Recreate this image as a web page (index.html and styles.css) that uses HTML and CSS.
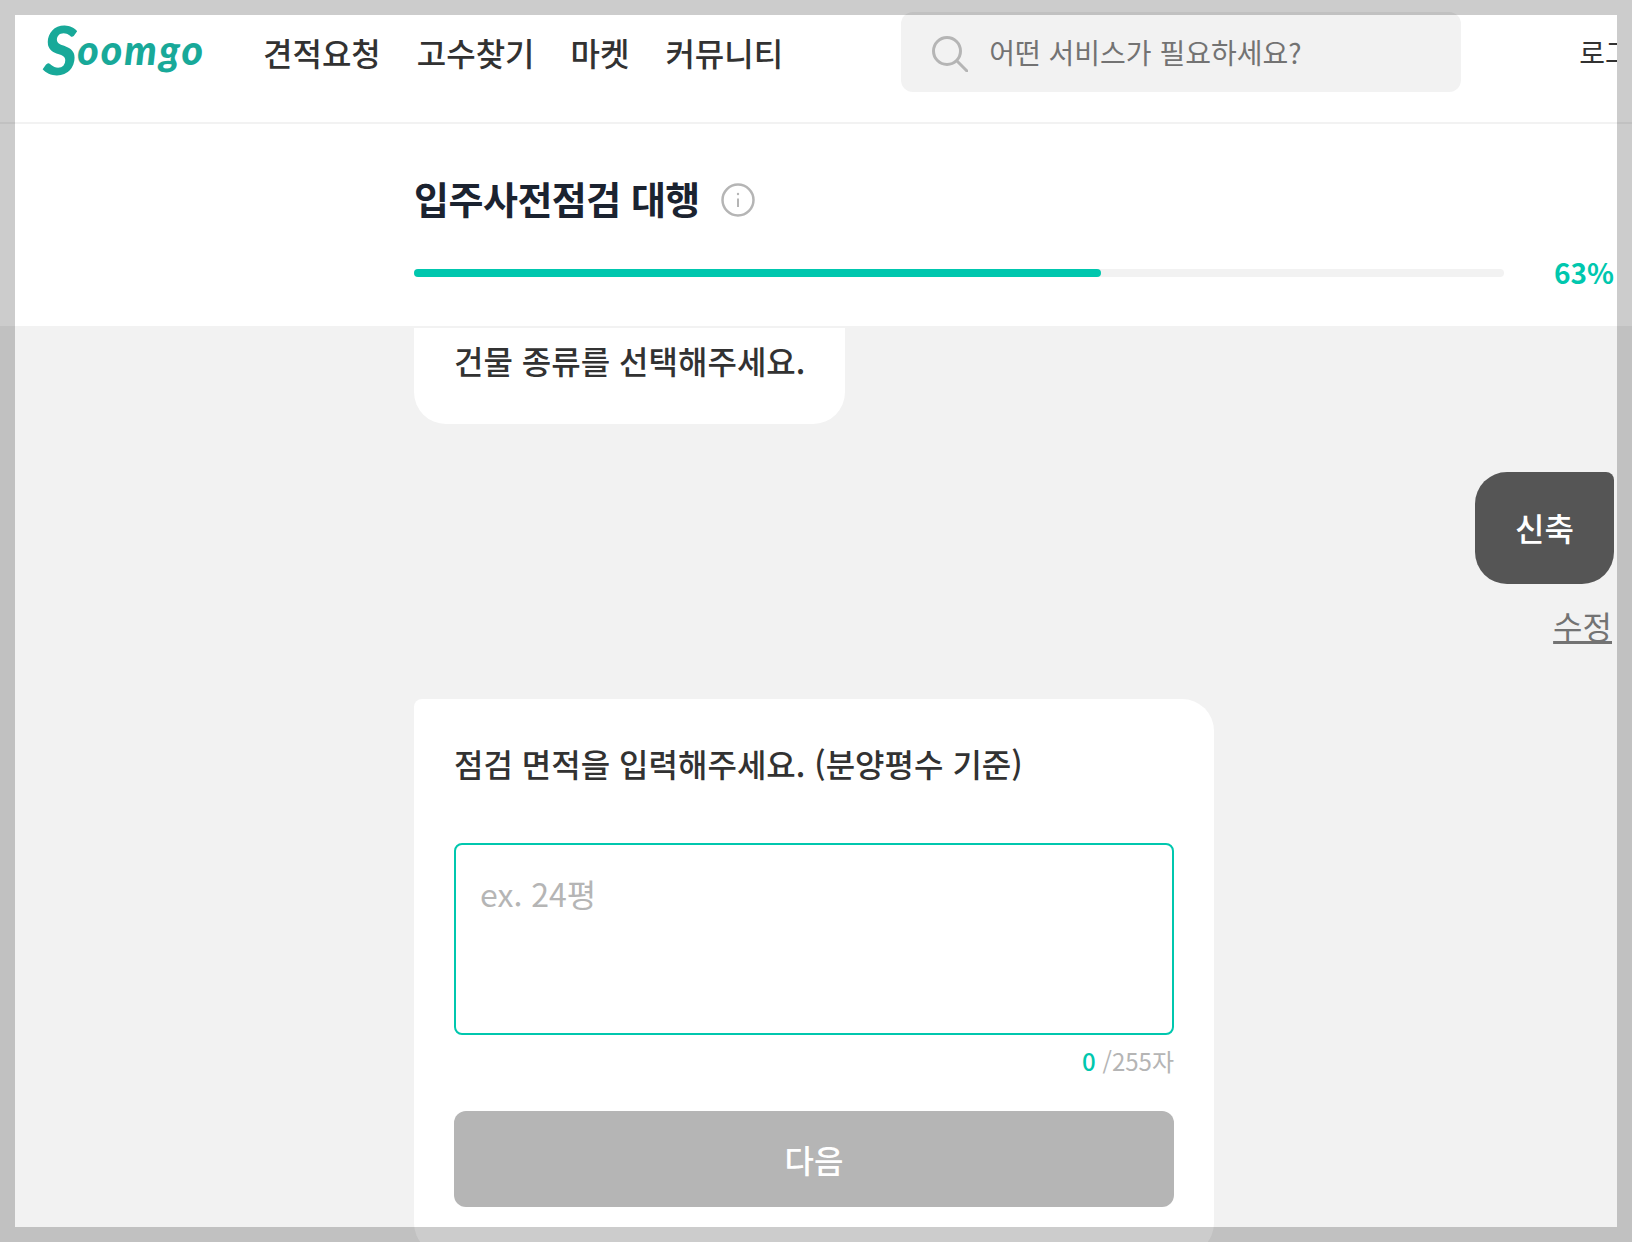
FILE: index.html
```html
<!DOCTYPE html>
<html lang="ko">
  <head>
    <meta charset="UTF-8" />
    <meta name="viewport" content="width=device-width, initial-scale=1.0" />
    <title>입주사전점검 대행</title>
    <link rel="stylesheet" href="styles.css">
  </head>
  <body>
    <header class="topbar">
      <a class="logo" href="#"><span class="logo-s">S</span><span class="logo-rest">oomgo</span></a>
      <nav class="nav">
        <a href="#">견적요청</a>
        <a href="#">고수찾기</a>
        <a href="#">마켓</a>
        <a href="#">커뮤니티</a>
      </nav>
      <div class="search">
        <svg class="search-icon" width="36" height="36" viewBox="0 0 36 36" fill="none" stroke="#b5b5b5" stroke-width="3" stroke-linecap="round">
          <circle cx="15" cy="15" r="13.5" />
          <path d="M25 25 L35 35" />
        </svg>
        <span class="search-text">어떤 서비스가 필요하세요?</span>
      </div>
      <div class="login"><a href="#">로그인</a></div>
    </header>

    <section class="progress-panel">
      <div class="title-row">
        <h1>입주사전점검 대행</h1>
        <svg class="info-icon" width="34" height="34" viewBox="0 0 34 34" fill="none" stroke="#b5b5b5" stroke-width="2.5">
          <circle cx="17" cy="17" r="15.5" />
          <path d="M17 15.5 V24" stroke-width="2" />
          <circle cx="17" cy="11" r="1.2" fill="#b5b5b5" stroke="none" />
        </svg>
      </div>
      <div class="progress-row">
        <div class="progress-track">
          <div class="progress-fill" style="width: 63%"></div>
        </div>
        <span class="progress-label">63%</span>
      </div>
    </section>

    <main class="chat">
      <div class="bubble">건물 종류를 선택해주세요.</div>
      <div class="answer">신축</div>
      <a class="edit-link" href="#">수정</a>

      <form class="question">
        <label for="area">점검 면적을 입력해주세요. (분양평수 기준)</label>
        <textarea id="area" placeholder="ex. 24평"></textarea>
        <div class="counter"><span class="count">0</span> /255자</div>
        <button type="button">다음</button>
      </form>
    </main>

    <div class="frame"></div>
  </body>
</html>
```

FILE: styles.css
```css
* {
  box-sizing: border-box;
}
body {
  margin: 0;
  height: 1242px;
  overflow: hidden;
  background-color: #f2f2f2;
  color: #323232;
  font-family: "Noto Sans CJK KR", "Noto Sans", sans-serif;
}
a {
  color: inherit;
  text-decoration: none;
}

.topbar {
  display: flex;
  align-items: center;
  height: 124px;
  padding: 0 15px 18px 43px;
  background-color: white;
  border-bottom: 2px solid #f2f2f2;
}
.logo {
  display: flex;
  align-items: flex-start;
  width: 160px;
  height: 54px;
  color: #18a999;
  font-family: Lato, sans-serif;
  font-style: italic;
  font-weight: 900;
  white-space: nowrap;
}
.logo-s {
  font-size: 66px;
  line-height: 49px;
}
.logo-rest {
  font-size: 41px;
  letter-spacing: 2px;
  line-height: 50px;
}
.nav {
  display: flex;
  gap: 36px;
  margin-left: 60px;
  font-size: 32px;
  font-weight: 500;
}
.search {
  display: flex;
  align-items: center;
  flex: none;
  width: 560px;
  height: 80px;
  margin-left: 118px;
  padding-left: 31px;
  background-color: #f2f2f2;
  border-radius: 12px;
}
.search-icon {
  flex: none;
  margin-top: 3px;
}
.search-text {
  margin-left: 21px;
  color: #737373;
  font-size: 28px;
}
.login {
  flex: 1;
  margin-left: 118px;
  overflow: hidden;
  font-size: 28px;
  white-space: nowrap;
}

.progress-panel {
  height: 204px;
  padding: 40px 18px 0 414px;
  background-color: white;
  border-bottom: 2px solid #f2f2f2;
}
.title-row {
  display: flex;
  align-items: center;
  height: 72px;
}
h1 {
  margin: 0;
  padding-bottom: 6px;
  color: #1b2330;
  font-size: 38px;
  font-weight: 700;
  letter-spacing: -0.5px;
}
.info-icon {
  margin-left: 21px;
}
.progress-row {
  display: flex;
  align-items: center;
  justify-content: space-between;
  margin-top: 16px;
}
.progress-track {
  width: 1090px;
  height: 8px;
  background-color: #f2f2f2;
  border-radius: 4px;
}
.progress-fill {
  height: 100%;
  background-color: #00c7ae;
  border-radius: 4px;
}
.progress-label {
  padding-bottom: 2px;
  color: #00c7ae;
  font-size: 28px;
  font-weight: 700;
}

.chat {
  display: flex;
  flex-direction: column;
  align-items: flex-start;
  padding: 0 18px 0 414px;
}
.bubble {
  padding: 8px 40px 40px;
  background-color: white;
  border-radius: 0 0 32px 32px;
  font-size: 32px;
  font-weight: 500;
  line-height: 48px;
}
.answer {
  align-self: flex-end;
  margin-top: 48px;
  padding: 31px 40px 33px;
  background-color: #555;
  border-radius: 32px 8px 32px 32px;
  color: white;
  font-size: 32px;
  font-weight: 500;
  line-height: 48px;
}
.edit-link {
  align-self: flex-end;
  margin: 17px 2px 0 0;
  color: #737373;
  font-size: 32px;
  line-height: 48px;
  text-decoration: underline;
}

.question {
  display: flex;
  flex-direction: column;
  width: 800px;
  margin-top: 50px;
  padding: 38px 40px 48px;
  background-color: white;
  border-radius: 8px 32px 32px 32px;
}
.question label {
  font-size: 32px;
  font-weight: 500;
  line-height: 52px;
}
.question textarea {
  display: block;
  width: 100%;
  height: 192px;
  margin-top: 54px;
  padding: 24px 24px;
  background-color: white;
  border: 2px solid #00c7ae;
  border-radius: 8px;
  font-family: inherit;
  font-size: 32px;
  line-height: 48px;
  outline: none;
  resize: none;
}
.question textarea::placeholder {
  color: #b5b5b5;
}
.counter {
  margin-top: 7px;
  color: #b5b5b5;
  font-size: 24px;
  line-height: 38px;
  text-align: right;
}
.count {
  color: #00c7ae;
  font-weight: 500;
}
.question button {
  flex: none;
  height: 96px;
  margin-top: 31px;
  background-color: #b5b5b5;
  border: none;
  border-radius: 12px;
  color: white;
  font-family: inherit;
  font-size: 32px;
  font-weight: 500;
}

.frame {
  position: fixed;
  inset: 0;
  border: 15px solid rgba(0, 0, 0, 0.2);
  pointer-events: none;
}
```
